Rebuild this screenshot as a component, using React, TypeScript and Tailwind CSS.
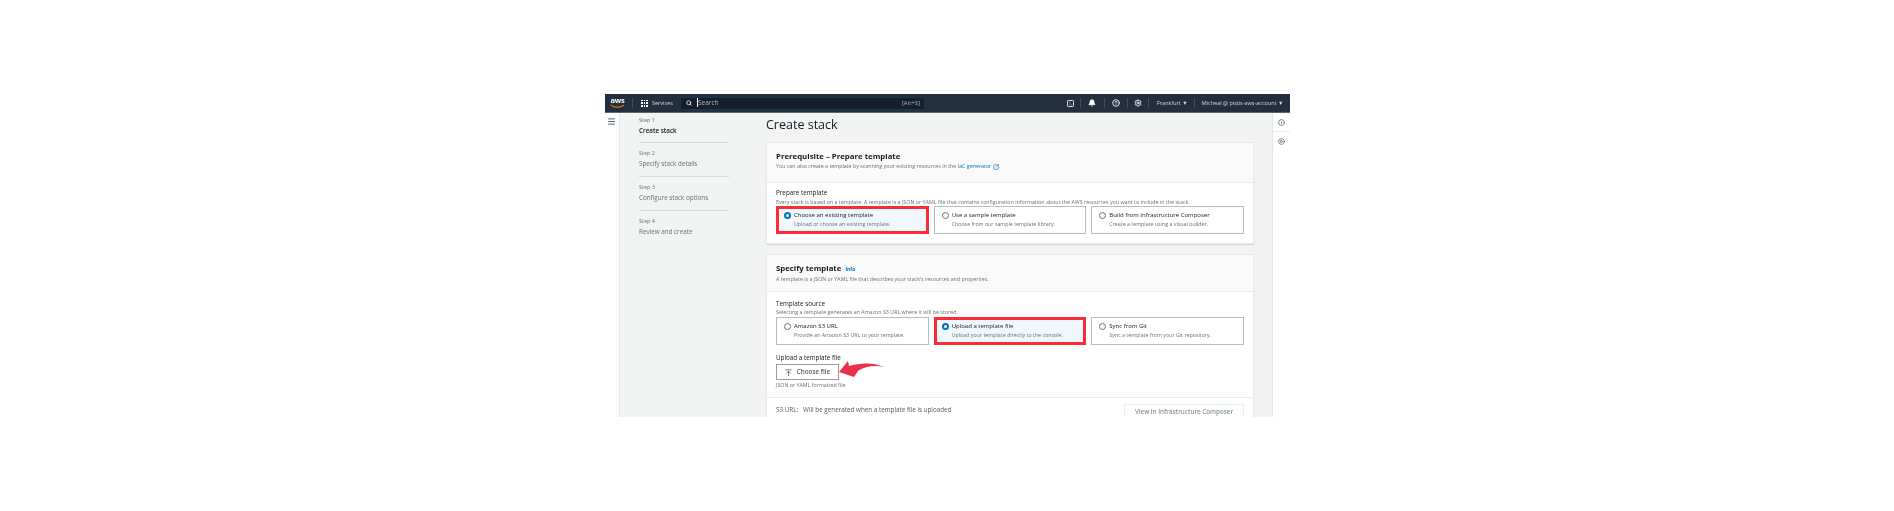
import { Bell, CircleHelp, CirclePlay, Info, Menu, Search, Settings, SquareArrowOutUpRight } from "lucide-react";

type RadioCardProps = {
  title: string;
  description: string;
  selected?: boolean;
};

const STEPS = [
  { step: "Step 1", label: "Create stack", active: true },
  { step: "Step 2", label: "Specify stack details" },
  { step: "Step 3", label: "Configure stack options" },
  { step: "Step 4", label: "Review and create" },
];

function RadioCard({ title, description, selected }: RadioCardProps) {
  return (
    <div
      className={`flex h-[28px] gap-[3px] ${
        selected
          ? "border-[3px] border-[#fb2c36] bg-[#f0f8fd] pt-[1px] pl-[5px]"
          : "border border-[#b4bebf] bg-white pt-[3px] pl-[7px]"
      }`}
    >
      <span
        className={`mt-[2px] size-[7px] shrink-0 rounded-full ${
          selected ? "border-2 border-[#0073bb] bg-white" : "border border-[#687078] bg-white"
        }`}
      />
      <div className="min-w-0 whitespace-nowrap">
        <div className="text-[6px] leading-[10px] font-medium text-[#16191f]">{title}</div>
        <div className="text-[5.3px] leading-[9px] text-[#687078]">{description}</div>
      </div>
    </div>
  );
}

function Card({ header, children }: { header: React.ReactNode; children: React.ReactNode }) {
  return (
    <section className="border border-[#e9ebeb] bg-white shadow-[0_1px_1px_#d5dbdb]">
      <div className="border-b border-[#eaeded] bg-[#fafafa] px-[9px]">{header}</div>
      {children}
    </section>
  );
}

function AwsLogo() {
  return (
    <div className="relative h-[15px] w-[15px] shrink-0">
      <div className="text-center text-[7.5px] leading-[9px] font-bold tracking-[-0.2px] text-white">aws</div>
      <svg viewBox="0 0 15 5" className="absolute top-[8px] left-0 h-[5px] w-[15px]">
        <path d="M0.5 0.8 C4 4 10 4 14 1" fill="none" stroke="#f90" strokeWidth="1" />
      </svg>
    </div>
  );
}

function NavSeparator() {
  return <span className="block h-[10px] w-px bg-[#414d5c]" />;
}

function TerminalIcon() {
  return (
    <svg viewBox="0 0 8 8" className="size-[7px]">
      <rect x="0.5" y="0.5" width="7" height="7" rx="1" fill="none" stroke="#fff" strokeWidth="1" />
      <path d="M2.2 2.2 L3.8 3.8 L2.2 5.4 M4 5.6 H6" fill="none" stroke="#aab7b8" strokeWidth="0.7" />
    </svg>
  );
}

function NavBar() {
  return (
    <header className="flex h-[19px] shrink-0 items-center border-b border-[#596572] bg-[#232f3e] pl-[5px] text-white">
      <AwsLogo />
      <span className="mr-[8px] ml-[7px]">
        <NavSeparator />
      </span>
      <div className="grid size-[7px] grid-cols-3 gap-[1px]">
        {Array.from({ length: 9 }).map((_, i) => (
          <span key={i} className="bg-white" />
        ))}
      </div>
      <span className="ml-[4px] w-[28px] text-[5.5px] text-[#d5dbdb]">Services</span>
      <div className="flex h-[13px] w-[245px] items-center border border-[#16384a] bg-[#161e2d] pr-[4px] pl-[5px] text-[6.5px] text-[#aab7b8]">
        <Search className="mr-[5px] size-[6px] text-white" strokeWidth={3} />
        <span className="flex-1 leading-[8px]">
          <span className="border-l border-white">Search</span>
        </span>
        <span className="text-[6px]">[Alt+S]</span>
      </div>
      <div className="ml-[142px] flex items-center gap-[6px] text-[#d5dbdb]">
        <TerminalIcon />
        <NavSeparator />
        <Bell className="ml-[1px] size-[8px] fill-white text-white" strokeWidth={2} />
        <span className="ml-[2px]">
          <NavSeparator />
        </span>
        <CircleHelp className="ml-[1px] size-[8px] text-white" strokeWidth={2.5} />
        <span className="ml-[1px]">
          <NavSeparator />
        </span>
        <Settings className="size-[8px] text-white" strokeWidth={2.5} />
        <NavSeparator />
        <span className="ml-[2px] text-[5.5px] whitespace-nowrap">Frankfurt ▼</span>
        <NavSeparator />
        <span className="ml-[1px] text-[5.5px] whitespace-nowrap">Micheal @ pistis-aws-account ▼</span>
      </div>
    </header>
  );
}

function StepList() {
  return (
    <nav className="w-[90px] shrink-0">
      {STEPS.map((s, i) => (
        <div
          key={s.step}
          className={`${i === 0 ? "h-[30px] pt-[3px]" : "h-[34px] pt-[6px]"} ${i < 3 ? "border-b border-[#d5dbdb]" : ""}`}
        >
          <div className="text-[5.5px] leading-[9px] text-[#687078]">{s.step}</div>
          <div className={`text-[6.3px] leading-[11px] ${s.active ? "font-semibold text-[#16191f]" : "text-[#687078]"}`}>
            {s.label}
          </div>
        </div>
      ))}
    </nav>
  );
}

function UploadArrow() {
  return (
    <svg viewBox="0 0 46 16" className="mb-[6px] h-[16px] w-[46px]">
      <path d="M0 11 L9 0 L10 5 C20 2 34 1 45 6 C36 4 26 5 19 10 L15 16 Z" fill="#ec2f4b" />
    </svg>
  );
}

export default function App() {
  return (
    <div className="h-[511px] w-[1894px] overflow-hidden bg-white pt-[94px] pl-[605px] font-['Open_Sans',sans-serif]">
      <div className="flex h-[323px] w-[685px] flex-col overflow-hidden blur-[0.4px]">
        <NavBar />
        <div className="flex min-h-0 flex-1 bg-[#f2f3f3]">
          <aside className="w-[15px] shrink-0 border-r border-[#e3e6e6] bg-white pt-[4px] pl-[2px]">
            <Menu className="size-[9px] text-[#545b64]" strokeWidth={2.5} />
          </aside>
          <div className="ml-[19px]">
            <StepList />
          </div>
          <main className="ml-[37px] w-[488px] shrink-0">
            <h1 className="h-[29px] pt-[2px] text-[12.5px] leading-[19px] text-[#16191f]">Create stack</h1>
            <Card
              header={
                <div className="h-[39px] pt-[7px]">
                  <h2 className="text-[7.8px] leading-[12px] font-bold text-[#16191f]">Prerequisite – Prepare template</h2>
                  <p className="text-[5.3px] leading-[9px] text-[#687078]">
                    You can also create a template by scanning your existing resources in the{" "}
                    <span className="text-[#0073bb]">IaC generator</span>{" "}
                    <SquareArrowOutUpRight className="inline size-[6px] text-[#0073bb]" strokeWidth={2.5} />.
                  </p>
                </div>
              }
            >
              <div className="h-[60px] px-[9px] pt-[5px]">
                <div className="text-[6.3px] leading-[9px] text-[#16191f]">Prepare template</div>
                <p className="mt-[1px] text-[5.33px] leading-[8px] text-[#687078]">
                  Every stack is based on a template. A template is a JSON or YAML file that contains configuration information about the AWS resources you want to include in the stack.
                </p>
                <div className="grid grid-cols-3 gap-[5px]">
                  <RadioCard selected title="Choose an existing template" description="Upload or choose an existing template." />
                  <RadioCard title="Use a sample template" description="Choose from our sample template library." />
                  <RadioCard title="Build from Infrastructure Composer" description="Create a template using a visual builder." />
                </div>
              </div>
            </Card>
            <div className="mt-[10px]">
              <Card
                header={
                  <div className="h-[36px] pt-[7px]">
                    <h2 className="text-[7.8px] leading-[12px] font-bold text-[#16191f]">
                      Specify template <span className="ml-[2px] text-[5px] font-bold text-[#0073bb]">Info</span>
                    </h2>
                    <p className="text-[5.3px] leading-[9px] text-[#687078]">
                      A template is a JSON or YAML file that describes your stack's resources and properties.
                    </p>
                  </div>
                }
              >
                <div className="px-[9px] pt-[7px]">
                  <div className="text-[6.3px] leading-[9px] text-[#16191f]">Template source</div>
                  <p className="text-[5.33px] leading-[9px] text-[#687078]">
                    Selecting a template generates an Amazon S3 URL where it will be stored.
                  </p>
                  <div className="grid grid-cols-3 gap-[5px]">
                    <RadioCard title="Amazon S3 URL" description="Provide an Amazon S3 URL to your template." />
                    <RadioCard selected title="Upload a template file" description="Upload your template directly to the console." />
                    <RadioCard title="Sync from Git" description="Sync a template from your Git repository." />
                  </div>
                  <div className="mt-[8px] text-[6.3px] leading-[9px] text-[#16191f]">Upload a template file</div>
                  <div className="mt-[2px] flex h-[16px] items-center">
                    <button className="flex h-[16px] w-[63px] items-center justify-center gap-[5px] border border-[#95a1a2] bg-white text-[6.3px] font-semibold text-[#545b64]">
                      <svg viewBox="0 0 8 8" className="size-[7px]">
                        <path d="M0.5 1 H7.5 M4 8 V2.5 M1.5 5 L4 2.5 L6.5 5" fill="none" stroke="#545b64" strokeWidth="0.9" />
                      </svg>
                      Choose file
                    </button>
                    <UploadArrow />
                  </div>
                  <p className="mt-[1px] text-[5.3px] leading-[9px] text-[#687078]">JSON or YAML formatted file</p>
                </div>
                <div className="mt-[7px] flex items-start justify-between border-t border-[#eaeded] pt-[6px] pr-[9px] pl-[9px]">
                  <span className="pt-[1px] text-[6.3px] text-[#545b64]">
                    S3 URL:<span className="ml-[5px]">Will be generated when a template file is uploaded</span>
                  </span>
                  <button className="h-[16px] w-[120px] border border-[#eaeded] bg-white text-[6.25px] font-semibold text-[#879596]">
                    View in Infrastructure Composer
                  </button>
                </div>
              </Card>
            </div>
          </main>
          <aside className="ml-[18px] flex-1 border-l border-[#e3e6e6] bg-white pt-[6px]">
            <div className="flex h-[13px] justify-center border-b border-[#eaeded]">
              <Info className="size-[7px] text-[#545b64]" strokeWidth={2.5} />
            </div>
            <div className="mt-[6px] flex justify-center">
              <CirclePlay className="size-[7px] text-[#545b64]" strokeWidth={2.5} />
            </div>
          </aside>
        </div>
      </div>
    </div>
  );
}
